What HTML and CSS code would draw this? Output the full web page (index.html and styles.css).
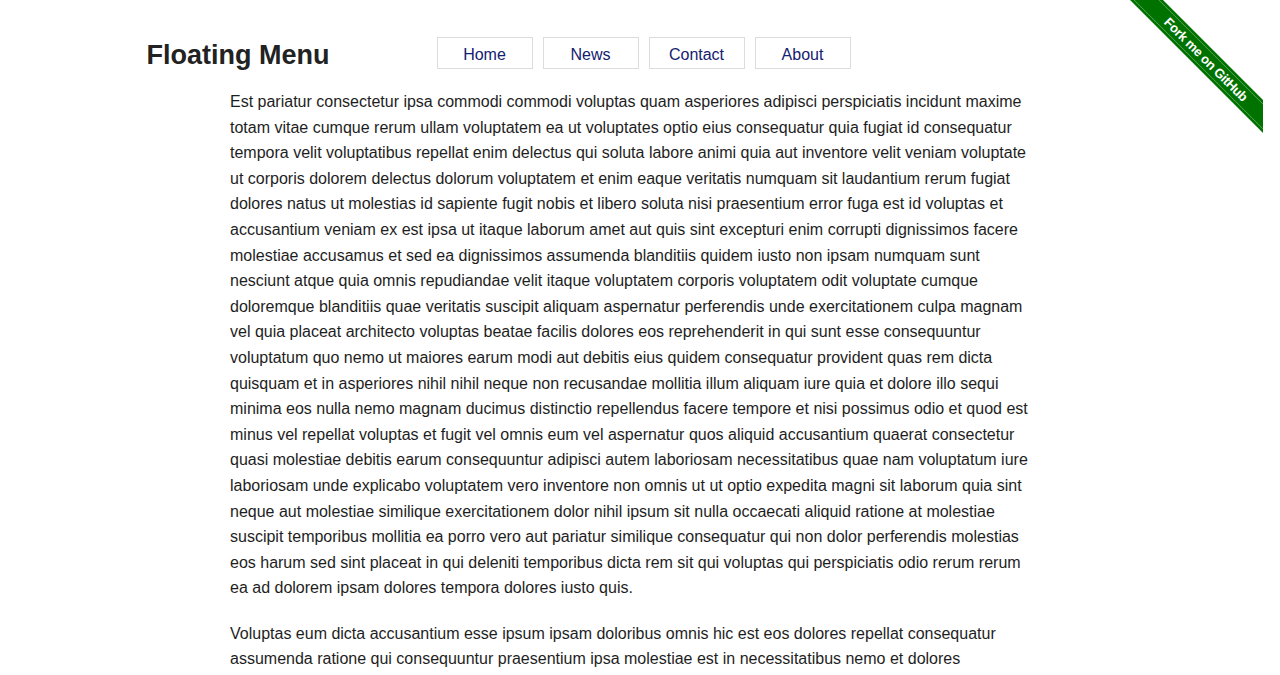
FILE: index.html
```html
<!DOCTYPE html>
<html lang="en">
<head>
<meta charset="utf-8">
<title>Floating Menu</title>
<link rel="stylesheet" href="styles.css">
</head>
<body>
<div class="ribbon"><a class="ribbon-band" href="#">Fork me on GitHub</a></div>
<header class="header">
  <h1 class="title">Floating Menu</h1>
  <nav class="nav">
    <a class="nav-item" href="#">Home</a>
    <a class="nav-item" href="#">News</a>
    <a class="nav-item" href="#">Contact</a>
    <a class="nav-item" href="#">About</a>
  </nav>
</header>
<main class="content">
  <p class="para">Est pariatur consectetur ipsa commodi commodi voluptas quam asperiores adipisci perspiciatis incidunt maxime totam vitae cumque rerum ullam voluptatem ea ut voluptates optio eius consequatur quia fugiat id consequatur tempora velit voluptatibus repellat enim delectus qui soluta labore animi quia aut inventore velit veniam voluptate ut corporis dolorem delectus dolorum voluptatem et enim eaque veritatis numquam sit laudantium rerum fugiat dolores natus ut molestias id sapiente fugit nobis et libero soluta nisi praesentium error fuga est id voluptas et accusantium veniam ex est ipsa ut itaque laborum amet aut quis sint excepturi enim corrupti dignissimos facere molestiae accusamus et sed ea dignissimos assumenda blanditiis quidem iusto non ipsam numquam sunt nesciunt atque quia omnis repudiandae velit itaque voluptatem corporis voluptatem odit voluptate cumque doloremque blanditiis quae veritatis suscipit aliquam aspernatur perferendis unde exercitationem culpa magnam vel quia placeat architecto voluptas beatae facilis dolores eos reprehenderit in qui sunt esse consequuntur voluptatum quo nemo ut maiores earum modi aut debitis eius quidem consequatur provident quas rem dicta quisquam et in asperiores nihil nihil neque non recusandae mollitia illum aliquam iure quia et dolore illo sequi minima eos nulla nemo magnam ducimus distinctio repellendus facere tempore et nisi possimus odio et quod est minus vel repellat voluptas et fugit vel omnis eum vel aspernatur quos aliquid accusantium quaerat consectetur quasi molestiae debitis earum consequuntur adipisci autem laboriosam necessitatibus quae nam voluptatum iure laboriosam unde explicabo voluptatem vero inventore non omnis ut ut optio expedita magni sit laborum quia sint neque aut molestiae similique exercitationem dolor nihil ipsum sit nulla occaecati aliquid ratione at molestiae suscipit temporibus mollitia ea porro vero aut pariatur similique consequatur qui non dolor perferendis molestias eos harum sed sint placeat in qui deleniti temporibus dicta rem sit qui voluptas qui perspiciatis odio rerum rerum ea ad dolorem ipsam dolores tempora dolores iusto quis.</p>
  <p class="para">Voluptas eum dicta accusantium esse ipsum ipsam doloribus omnis hic est eos dolores repellat consequatur assumenda ratione qui consequuntur praesentium ipsa molestiae est in necessitatibus nemo et dolores voluptatibus sint voluptatem nobis repellendus aut quam veritatis ad animi consectetur eligendi odit quod harum facilis velit laborum.</p>
</main>
</body>
</html>
```
FILE: styles.css
```css
html, body {
  margin: 0;
  padding: 0;
  background: #fff;
}
body {
  font-family: "Liberation Sans", Arial, sans-serif;
  color: #222;
  padding-right: 17px;
}
.header {
  width: 970px;
  margin: 0 auto;
  padding-top: 37px;
  display: flex;
  align-items: flex-start;
}
.title {
  width: 290px;
  margin: 4px 0 0 0;
  font-size: 27px;
  line-height: 29px;
  font-weight: bold;
  color: #222;
}
.nav {
  display: flex;
  gap: 10px;
}
.nav-item {
  display: block;
  width: 94px;
  height: 30px;
  line-height: 33px;
  border: 1px solid #dcdcdc;
  text-align: center;
  font-size: 16px;
  color: #142070;
  text-decoration: none;
}
.content {
  width: 800px;
  margin: 0 auto;
  padding-top: 19px;
  padding-right: 3px;
}
.para {
  margin: 0 0 20px 0;
  font-size: 16px;
  line-height: 25.6px;
  color: #1e1e1e;
}
.ribbon {
  position: absolute;
  top: 0;
  right: 17px;
  width: 149px;
  height: 149px;
  overflow: hidden;
}
.ribbon-band {
  position: absolute;
  left: -8px;
  top: 48px;
  width: 200px;
  height: 19px;
  line-height: 20px;
  background: #007200;
  border-top: 2px solid #007200;
  border-bottom: 2px solid #007200;
  box-shadow: inset 0 1px 0 rgba(255,255,255,0.35), inset 0 -1px 0 rgba(255,255,255,0.35);
  transform: rotate(45deg);
  color: #fff;
  font-family: "Liberation Sans", Arial, sans-serif;
  font-weight: bold;
  font-size: 13px;
  letter-spacing: -0.3px;
  text-align: center;
  text-decoration: none;
}
```
